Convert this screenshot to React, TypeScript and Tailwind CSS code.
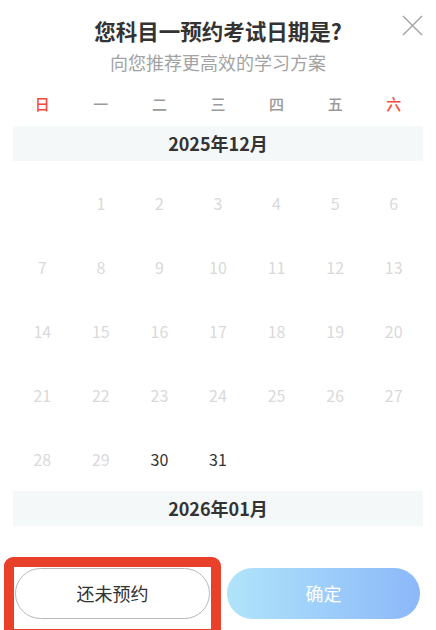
import React from 'react';

const WEEKDAYS = ['日', '一', '二', '三', '四', '五', '六'];

// December 2025 starts on a Monday; only 30 and 31 are still selectable.
const DEC_DAYS: (number | null)[] = [null, ...Array.from({ length: 31 }, (_, i) => i + 1)];
const ENABLED = new Set([30, 31]);

export default function App() {
  return (
    <div className="relative h-[630px] w-[436px] overflow-hidden bg-white font-['Noto_Sans_CJK_SC','Noto_Sans',sans-serif]">
      {/* ─── Header ─────────────────────────────────────────── */}
      <header className="pt-4 text-center">
        <h1 className="text-[21.5px] font-bold leading-[30px] text-[#333]">您科目一预约考试日期是?</h1>
        <p className="text-[18px] leading-[32px] text-[#a3a3a3]">向您推荐更高效的学习方案</p>
      </header>
      <button className="absolute right-[13px] top-[14px] size-[22px]" aria-label="close">
        <svg viewBox="0 0 22 22" className="size-full" fill="none" stroke="#a6a6a6" strokeWidth="1.5">
          <path d="M2 2L21 21M21 2L2 21" />
        </svg>
      </button>

      {/* ─── Weekday row ────────────────────────────────────── */}
      <div className="mt-2 grid h-[36px] grid-cols-7 items-center px-[13px] text-center text-[15px] font-medium">
        {WEEKDAYS.map((d, i) => (
          <span key={d} className={i === 0 || i === 6 ? 'text-[#f24a3c]' : 'text-[#9a9a9a]'}>
            {d}
          </span>
        ))}
      </div>

      {/* ─── Months ─────────────────────────────────────────── */}
      <div className="mt-1 px-[13px]">
        <MonthBar label="2025年12月" />
        <div className="grid grid-cols-7 pt-[10px] text-center text-[16px]">
          {DEC_DAYS.map((d, i) => (
            <div key={i} className="flex h-[64px] items-center justify-center">
              {d !== null && (
                <span className={ENABLED.has(d) ? 'text-[#333]' : 'text-[#d9d9d9]'}>{d}</span>
              )}
            </div>
          ))}
        </div>
        <MonthBar label="2026年01月" />
      </div>

      {/* ─── Actions ────────────────────────────────────────── */}
      <div className="mt-[42px] flex gap-[17px] pl-[15px] pr-[16px]">
        <button className="h-[51px] flex-1 rounded-full border border-[#b8b8b8] bg-white text-[18px] text-[#333]">
          还未预约
        </button>
        <button className="h-[51px] flex-1 rounded-full bg-gradient-to-r from-[#b0e4fa] to-[#8cb8f9] text-[18px] text-white">
          确定
        </button>
      </div>

      {/* annotation frame over the first button */}
      <div className="pointer-events-none absolute left-[4px] top-[557px] h-[82px] w-[217px] rounded-[9px] border-[10px] border-[#e9402a]" />
    </div>
  );
}

function MonthBar({ label }: { label: string }) {
  return (
    <div className="flex h-[35px] items-center justify-center bg-[#f5f8f9] text-[18px] font-bold text-[#333]">
      {label}
    </div>
  );
}
